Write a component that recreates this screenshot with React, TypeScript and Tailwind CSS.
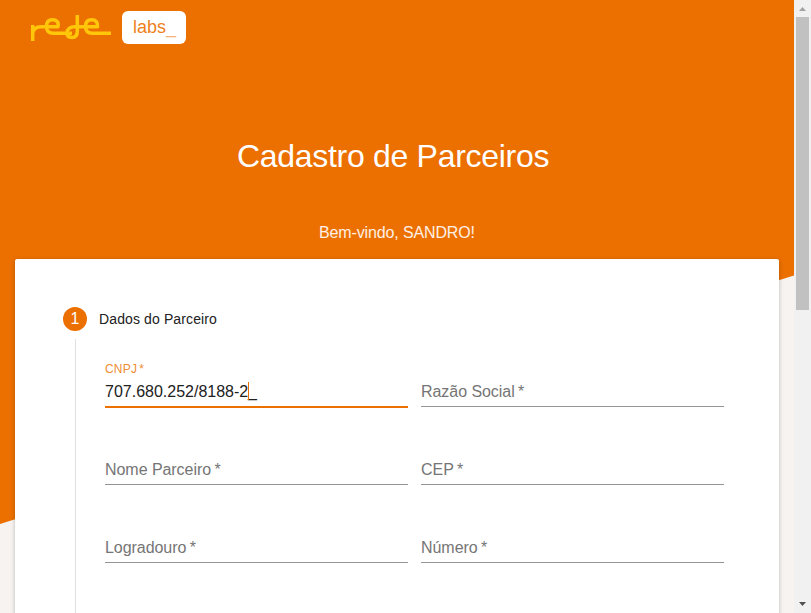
function RedeLogo() {
  return (
    <svg width="82" height="33" viewBox="0 0 82 33" fill="none" stroke="#ffc60a" strokeWidth="3.5" strokeLinejoin="round" className="block">
      <path d="M2.700 30V14M2.700 22C3.500 18 6 15.700 11 15.700H28C29 11 26.500 8.800 22.500 8.800C18.500 8.800 16.500 11.500 16.500 15.500C16.500 20 19 22.300 23.500 22.300H42" />
      <path d="M47.300 4V20C47.300 24.500 45.500 26.500 42 26.500C38.800 26.500 37 25 37 22C37 18 40 15.700 45 15.700H67.500C68 11 65.500 8.800 61.800 8.800C57.500 8.800 55.500 11.500 55.500 15.500C55.500 20 58 22.300 62.500 22.300H81" />
    </svg>
  );
}

function Field({ label }: { label: string }) {
  return (
    <div className="h-[25px] border-b border-[#949494] text-base leading-5 tracking-[-0.05px] text-[#757575]">
      {label} <span className="-ml-px">*</span>
    </div>
  );
}

function ActiveField({ label, value }: { label: string; value: string }) {
  return (
    <div className="relative -mb-px h-[26px] border-b-2 border-[#ec7000] text-base leading-5 text-[#212121]">
      <label className="absolute -top-[21px] left-0 text-xs leading-4 tracking-[0.2px] text-[#f08c33]">
        {label} <span className="-ml-[1.5px]">*</span>
      </label>
      <div className="flex">
        <span className="w-[143px] whitespace-nowrap">{value}</span>
        <span className="relative z-10 h-[18px] w-px bg-[#ec7000]" />
        <span className="-ml-px">_</span>
      </div>
    </div>
  );
}

export default function App() {
  return (
    <div className="flex h-[613px] w-[811px] overflow-hidden bg-[#f7f3f0] font-['Liberation_Sans',Arial,sans-serif]">
      <main className="relative isolate h-[613px] w-[794px] overflow-hidden">
        <div className="absolute inset-0 -z-10 bg-[#ec7000] [clip-path:polygon(0_0,100%_0,100%_275.5px,0_524px)]" />
        <header className="flex h-[55px] items-start gap-2.5 pt-[11px] pl-[30px]">
          <RedeLogo />
          <div className="h-[33px] w-16 rounded-md bg-white pl-[11px] text-[18px] leading-[32px] text-[#ee7f1d]">
            labs<span className="opacity-60">_</span>
          </div>
        </header>
        <h1 className="mt-[81px] pl-[237px] text-[32px] leading-10 tracking-[-0.3px] whitespace-nowrap text-white">
          Cadastro de Parceiros
        </h1>
        <p className="mt-[47px] pl-[319px] text-base leading-5 tracking-[-0.13px] whitespace-nowrap text-white/90">
          Bem-vindo, SANDRO!
        </p>
        <section className="mt-4 ml-[15px] h-[400px] w-[764px] rounded-[2px] bg-white px-12 pt-12 shadow-[0_1px_4px_rgba(0,0,0,0.25)]">
          <div className="flex h-6 items-center gap-3">
            <span className="flex size-6 items-center justify-center rounded-full bg-[#ec7000] text-base text-white">1</span>
            <h2 className="text-sm tracking-[0.12px] text-[#212121]">Dados do Parceiro</h2>
          </div>
          <div className="mt-2 ml-3 h-[400px] border-l border-[#e0e0e0] pl-[29px]">
            <div className="grid grid-cols-[303px_303px] gap-x-[13px] gap-y-[53px] pt-[43px]">
              <ActiveField label="CNPJ" value="707.680.252/8188-2" />
              <Field label="Razão Social" />
              <Field label="Nome Parceiro" />
              <Field label="CEP" />
              <Field label="Logradouro" />
              <Field label="Número" />
            </div>
          </div>
        </section>
      </main>
      <aside className="flex h-full w-[17px] flex-col items-center bg-[#f1f1f1]">
        <svg width="17" height="17" viewBox="0 0 17 17" fill="#a3a3a3">
          <path d="M5 11L8.500 7L12 11Z" />
        </svg>
        <div className="h-[293px] w-[13px] bg-[#c1c1c1]" />
        <svg className="mt-auto" width="17" height="17" viewBox="0 0 17 17" fill="#505050">
          <path d="M5 6L8.500 10L12 6Z" />
        </svg>
      </aside>
    </div>
  );
}
